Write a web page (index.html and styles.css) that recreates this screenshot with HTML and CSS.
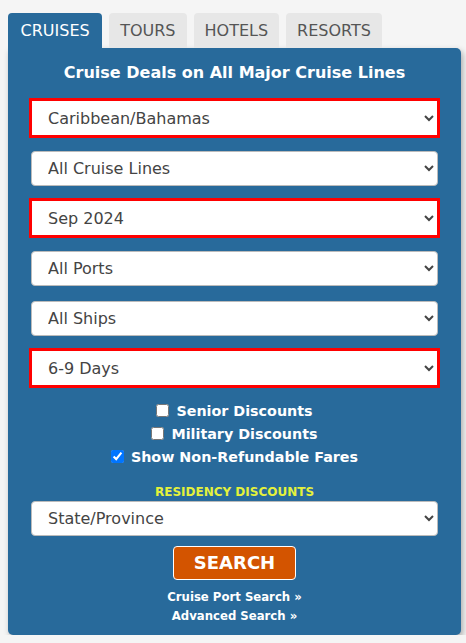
FILE: index.html
```html
<!DOCTYPE html>
<html>
<head>
<meta charset="utf-8">
<link rel="stylesheet" href="styles.css">
</head>
<body>
<div class="widget">
  <div class="tabs">
    <div class="tab active">CRUISES</div>
    <div class="tab">TOURS</div>
    <div class="tab">HOTELS</div>
    <div class="tab">RESORTS</div>
  </div>
  <div class="panel">
    <h1 class="title">Cruise Deals on All Major Cruise Lines</h1>
    <div class="row"><select class="sel hl"><option>Caribbean/Bahamas</option></select></div>
    <div class="row"><select class="sel"><option>All Cruise Lines</option></select></div>
    <div class="row"><select class="sel hl"><option>Sep 2024</option></select></div>
    <div class="row"><select class="sel"><option>All Ports</option></select></div>
    <div class="row"><select class="sel"><option>All Ships</option></select></div>
    <div class="row"><select class="sel hl"><option>6-9 Days</option></select></div>
    <div class="checks">
      <label class="chk"><input type="checkbox"> Senior Discounts</label>
      <label class="chk"><input type="checkbox"> Military Discounts</label>
      <label class="chk"><input type="checkbox" checked> Show Non-Refundable Fares</label>
    </div>
    <div class="resid">RESIDENCY DISCOUNTS</div>
    <select class="sel state"><option>State/Province</option></select>
    <div class="btnrow"><button class="search">SEARCH</button></div>
    <div class="links">
      <a class="lnk">Cruise Port Search &raquo;</a>
      <a class="lnk">Advanced Search &raquo;</a>
    </div>
  </div>
</div>
</body>
</html>
```
FILE: styles.css
```css
html, body {
  margin: 0;
  padding: 0;
  background: #f5f5f5;
}
body {
  padding: 13px 0 0 8px;
  font-family: "DejaVu Sans", Verdana, sans-serif;
}
.widget {
  width: 453px;
}
.tabs {
  display: flex;
  gap: 7px;
  height: 35px;
}
.tab {
  background: #e7e7e7;
  color: #555;
  font-size: 16px;
  padding: 0 11px;
  line-height: 35px;
  border-radius: 4px 4px 0 0;
}
.tab.active {
  background: #286a9b;
  color: #fff;
  padding: 0 12.5px;
}
.panel {
  background: #286a9b;
  border-radius: 0 5px 5px 5px;
  box-shadow: 2px 3px 6px rgba(0,0,0,0.3);
  padding: 13px 23px 9px 23px;
  display: flex;
  flex-direction: column;
}
.title {
  margin: 0 0 8px;
  font-size: 16px;
  font-weight: bold;
  color: #fff;
  text-align: center;
  line-height: 24px;
}
.row {
  height: 50px;
  display: flex;
  align-items: center;
  justify-content: center;
  margin: 0 -2px;
  padding: 0 2px;
}
.sel {
  display: block;
  height: 35px;
  border: 1px solid #bbb;
  border-radius: 4px;
  background: #fff;
  color: #444;
  font-family: inherit;
  font-size: 16px;
  padding: 0 0 0 12px;
  margin: 0;
  width: 100%;
  box-sizing: border-box;
  outline: none;
}
.row .sel.hl {
  border: 3px solid #ff0000;
  border-radius: 0;
  height: 40px;
  margin: 0 -2px;
  width: calc(100% + 4px);
  flex: none;
  padding-left: 12px;
}
.checks {
  margin-top: 7px;
  display: flex;
  flex-direction: column;
  align-items: center;
  color: #fff;
  font-size: 14.3px;
  font-weight: bold;
  line-height: 23px;
}
.chk input {
  margin: 0 2px 0 0;
  width: 13px;
  height: 13px;
  vertical-align: -1px;
}
.resid {
  margin-top: 14.5px;
  text-align: center;
  color: #e4f13b;
  font-size: 12px;
  font-weight: bold;
  line-height: 16px;
}
.sel.state {
  margin: 1px 0 10px;
}
.btnrow {
  display: flex;
  justify-content: center;
}
.search {
  width: 123px;
  height: 34px;
  background: #d35400;
  border: 1px solid #fff;
  border-radius: 4px;
  color: #fff;
  font-family: inherit;
  font-weight: bold;
  font-size: 18px;
  padding: 0;
}
.links {
  margin-top: 8.5px;
  display: flex;
  flex-direction: column;
  align-items: center;
  line-height: 19px;
}
.lnk {
  color: #fff;
  font-size: 11.7px;
  font-weight: bold;
}
```
